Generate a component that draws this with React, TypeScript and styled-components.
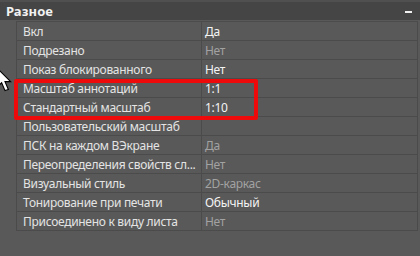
import React from "react";
import styled, { createGlobalStyle } from "styled-components";

const Global = createGlobalStyle`
  html, body { margin: 0; padding: 0; background: #595959; }
  body { font-family: "Noto Sans", "Open Sans", sans-serif; }
`;

const Page = styled.div`
  position: relative;
  width: 420px;
  height: 256px;
  overflow: hidden;
  background: #595959;
`;

const TopStrip = styled.div`
  height: 2px;
  background: #505050;
`;

const Header = styled.div`
  height: 18px;
  background: #454545;
  display: flex;
  align-items: center;
  justify-content: space-between;
  padding: 0 8px 0 6px;
  color: #f2f2f2;
  font-weight: 700;
  font-size: 13px;
  letter-spacing: 0.1px;
`;

const Collapse = styled.span`
  width: 7px;
  height: 2px;
  background: #f0f0f0;
  margin-top: 2px;
`;

const Table = styled.div`
  margin-left: 16px;
  width: 402px;
  border-top: 1px solid #4c4c4c;
  margin-top: 1px;
`;

const Row = styled.div`
  display: grid;
  grid-template-columns: 185px 1fr;
  height: 18px;
  border-bottom: 1px solid #4b4b4b;
  border-left: 1px solid #4b4b4b;
  border-right: 1px solid #4b4b4b;
  font-size: 12px;
  line-height: 18px;
  letter-spacing: -0.3px;
`;

const Label = styled.div`
  padding-left: 6px;
  color: #e4e4e4;
  border-right: 1px solid #4b4b4b;
  white-space: nowrap;
  padding-top: 1px;
  min-width: 0;
`;

const Value = styled.div<{ $dim?: boolean }>`
  padding-left: 3px;
  color: ${(p) => (p.$dim ? "#a2a2a2" : "#f4f4f4")};
  white-space: nowrap;
  padding-top: 1px;
`;

const Highlight = styled.div`
  position: absolute;
  left: 14px;
  top: 79px;
  width: 236px;
  height: 33px;
  border: 4px solid #ee0a0a;
  border-radius: 2px;
`;

const Cursor = styled.svg`
  position: absolute;
  left: -4px;
  top: 67px;
`;

const rows: { label: string; value: string; dim?: boolean }[] = [
  { label: "Вкл", value: "Да" },
  { label: "Подрезано", value: "Нет", dim: true },
  { label: "Показ блокированного", value: "Нет" },
  { label: "Масштаб аннотаций", value: "1:1" },
  { label: "Стандартный масштаб", value: "1:10" },
  { label: "Пользовательский масштаб", value: "" },
  { label: "ПСК на каждом ВЭкране", value: "Да", dim: true },
  { label: "Переопределения  свойств  сл...", value: "Нет", dim: true },
  { label: "Визуальный стиль", value: "2D-каркас", dim: true },
  { label: "Тонирование при печати", value: "Обычный" },
  { label: "Присоединено к виду листа", value: "Нет", dim: true },
];

export default function App() {
  return (
    <Page>
      <Global />
      <TopStrip />
      <Header>
        <span>Разное</span>
        <Collapse />
      </Header>
      <Table>
        {rows.map((r) => (
          <Row key={r.label}>
            <Label>{r.label}</Label>
            <Value $dim={r.dim}>{r.value}</Value>
          </Row>
        ))}
      </Table>
      <Highlight />
      <Cursor width="18" height="27" viewBox="0 0 16 24">
        <path
          d="M1 1 L1 18 L5 14 L8 21 L11 20 L8 13 L13 13 Z"
          fill="#ffffff"
          stroke="#000000"
          strokeWidth="1"
          strokeLinejoin="miter"
        />
      </Cursor>
    </Page>
  );
}
